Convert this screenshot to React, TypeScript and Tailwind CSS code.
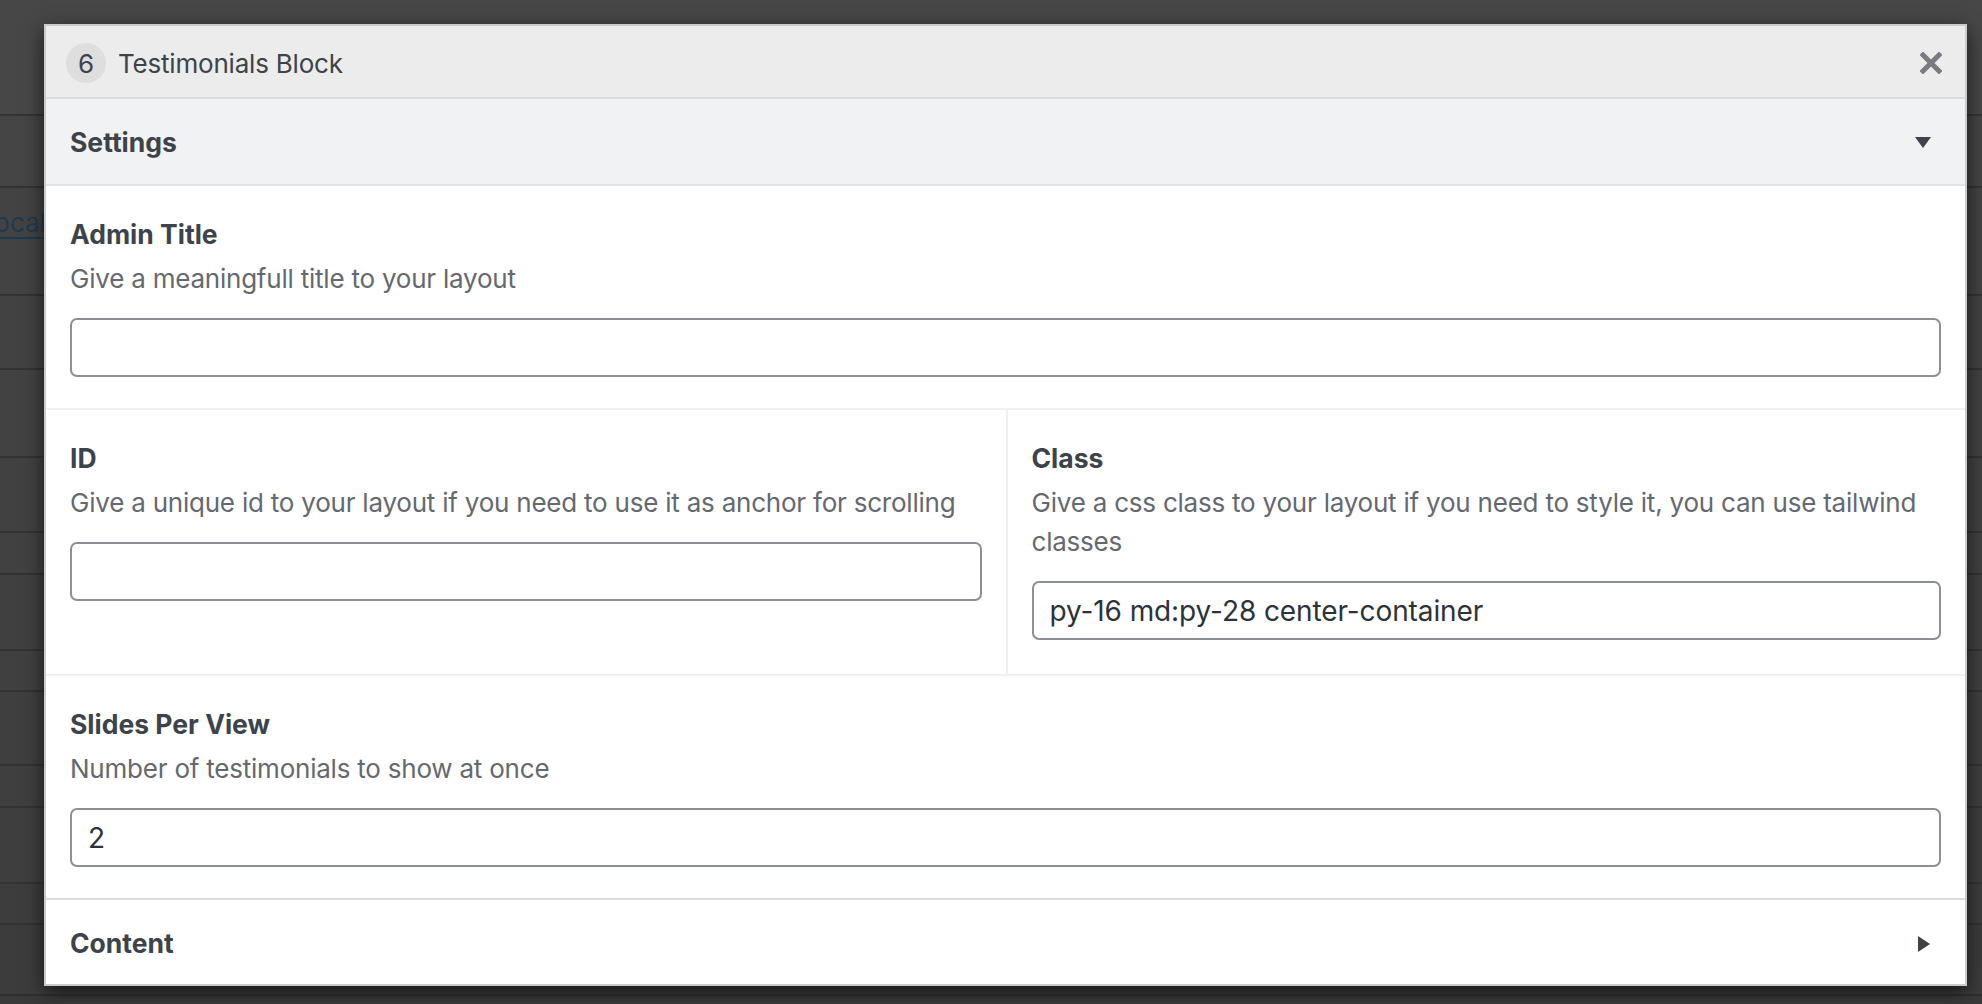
import React from "react";

const font = { fontFamily: "Inter, 'Noto Sans', sans-serif" };

function Field({
  label,
  desc,
  value,
  extraBottom,
}: {
  label: string;
  desc: string;
  value?: string;
  extraBottom?: boolean;
}) {
  return (
    <div className={extraBottom ? "px-[24px] pt-[29px] pb-[34px]" : "px-[24px] pt-[29px] pb-[31px]"}>
      <div className="text-[26.5px] leading-[39px] font-bold text-[#3c434a]">{label}</div>
      <div className="mt-[5px] text-[26px] leading-[39px] tracking-[-0.22px] text-[#646970]">{desc}</div>
      <div className="mt-[20px] flex h-[59px] items-center rounded-[7px] border-2 border-[#8c8f94] bg-white px-[16px] text-[28px] tracking-[-0.1px] text-[#2c3338]">
        {value}
      </div>
    </div>
  );
}

export default function App() {
  return (
    <div
      className="relative h-[1004px] w-[1982px] overflow-hidden bg-[#444444]"
      style={font}
    >
      {/* background table rows behind the overlay */}
      <div className="flex flex-col">
        <div className="h-[114px] bg-[#474747]" />
        <div className="h-[72px] border-t-2 border-[#333333] bg-[#454545]" />
        <div className="flex h-[108px] items-start border-t-2 border-[#333333] bg-[#434343] pt-[22px]">
          <span className="ml-[-12px] text-[26px] leading-[26px] text-[#1f3a4e] underline decoration-2 underline-offset-[5px]">
            localhost
          </span>
        </div>
        <div className="h-[74px] border-t-2 border-[#333333] bg-[#424242]" />
        <div className="h-[88px] border-t-2 border-[#333333] bg-[#424242]" />
        <div className="h-[75px] border-t-2 border-[#333333] bg-[#414141]" />
        <div className="h-[42px] border-t-2 border-[#333333] bg-[#414141]" />
        <div className="h-[76px] border-t-2 border-[#333333] bg-[#404040]" />
        <div className="h-[41px] border-t-2 border-[#333333] bg-[#404040]" />
        <div className="h-[74px] border-t-2 border-[#333333] bg-[#3f3f3f]" />
        <div className="h-[42px] border-t-2 border-[#333333] bg-[#3f3f3f]" />
        <div className="h-[76px] border-t-2 border-[#333333] bg-[#3e3e3e]" />
        <div className="h-[41px] border-t-2 border-[#333333] bg-[#3d3d3d]" />
        <div className="h-[71px] border-t-2 border-[#333333] bg-[#3c3c3c]" />
        <div className="h-[40px] border-t-2 border-[#303030] bg-[#3a3a3a]" />
      </div>

      {/* modal */}
      <div className="absolute left-[44px] top-[24px] w-[1923px] border-2 border-[#c9cbce] bg-white shadow-[0_6px_18px_rgba(0,0,0,0.65)]">
        {/* header */}
        <div className="flex h-[73px] items-center border-b-2 border-[#dcdcde] bg-[#ececec] pl-[20px] pr-[22px] pt-[3px]">
          <div className="flex h-[40px] w-[40px] items-center justify-center rounded-full bg-[#dedede] text-[26px] text-[#3c434a]">
            6
          </div>
          <div className="ml-[12px] text-[26px] tracking-[-0.2px] text-[#3c434a]">Testimonials Block</div>
          <div className="ml-auto flex h-[24px] w-[24px] items-center justify-center">
            <svg width="22" height="22" viewBox="0 0 22 22">
              <path
                d="M3 3 L19 19 M19 3 L3 19"
                stroke="#787c82"
                strokeWidth="5"
                strokeLinecap="square"
              />
            </svg>
          </div>
        </div>

        {/* settings accordion */}
        <div className="flex h-[87px] items-center border-b-2 border-[#e2e4e7] bg-[#f1f2f3] pl-[24px] pr-[34px] pt-[2px]">
          <div className="text-[26.5px] font-bold text-[#3c434a]">Settings</div>
          <svg className="ml-auto" width="16" height="11" viewBox="0 0 16 11">
            <path d="M0 0 H16 L8 11 Z" fill="#3c434a" />
          </svg>
        </div>

        <div className="border-b-2 border-[#f0f0f1]">
          <Field label="Admin Title" desc="Give a meaningfull title to your layout" />
        </div>

        <div className="grid grid-cols-2 border-b-2 border-[#f0f0f1]">
          <Field
            label="ID"
            desc="Give a unique id to your layout if you need to use it as anchor for scrolling"
          />
          <div className="border-l-2 border-[#f0f0f1]">
            <Field
              label="Class"
              desc="Give a css class to your layout if you need to style it, you can use tailwind classes"
              value="py-16 md:py-28 center-container"
              extraBottom
            />
          </div>
        </div>

        <Field
          label="Slides Per View"
          desc="Number of testimonials to show at once"
          value="2"
        />

        {/* content accordion */}
        <div className="flex h-[86px] items-center border-t-2 border-[#dcdcde] bg-white pl-[24px] pr-[35px] pt-[3px]">
          <div className="text-[26.5px] font-bold text-[#3c434a]">Content</div>
          <svg className="ml-auto" width="12" height="16" viewBox="0 0 12 16">
            <path d="M0 0 L12 8 L0 16 Z" fill="#3c434a" />
          </svg>
        </div>
      </div>
    </div>
  );
}
